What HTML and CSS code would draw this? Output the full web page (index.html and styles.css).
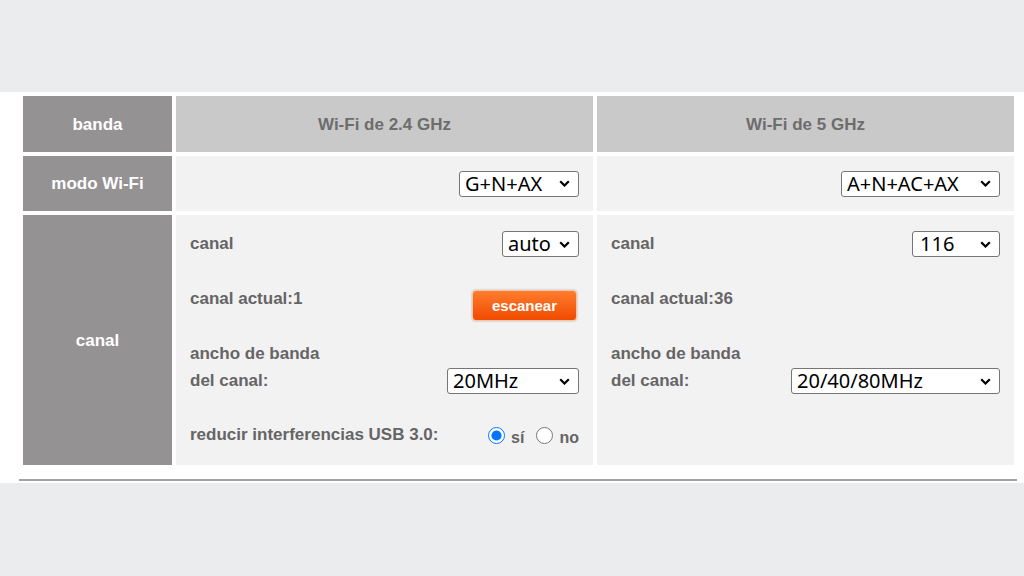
FILE: index.html
```html
<!DOCTYPE html>
<html lang="es">
<head>
    <meta charset="UTF-8">
    <meta name="viewport" content="width=device-width, initial-scale=1.0">
    <title>Wi-Fi</title>
    <link rel="stylesheet" href="styles.css">
</head>
<body>

    <div class="top-band"></div>

    <div class="page">
        <div class="wifi-grid">
            <!-- fila: banda -->
            <div class="cell label-cell">banda</div>
            <div class="cell head-cell">Wi-Fi de 2.4 GHz</div>
            <div class="cell head-cell">Wi-Fi de 5 GHz</div>

            <!-- fila: modo -->
            <div class="cell label-cell">modo Wi-Fi</div>
            <div class="cell mode-cell">
                <select class="sel sel-mode24"><option>G+N+AX</option></select>
            </div>
            <div class="cell mode-cell">
                <select class="sel sel-mode5"><option>A+N+AC+AX</option></select>
            </div>

            <!-- fila: canal -->
            <div class="cell label-cell">canal</div>
            <div class="cell body-cell">
                <div class="row row-channel">
                    <span class="txt">canal</span>
                    <select class="sel sel-auto"><option>auto</option></select>
                </div>
                <div class="row row-current">
                    <span class="txt">canal actual:1</span>
                    <button class="scan-btn">escanear</button>
                </div>
                <div class="row row-width">
                    <span class="txt two-lines">ancho de banda<br>del canal:</span>
                    <select class="sel sel-20"><option>20MHz</option></select>
                </div>
                <div class="row row-usb">
                    <span class="txt">reducir interferencias USB 3.0:</span>
                    <span class="radios">
                        <label class="radio-item"><input type="radio" name="usb" checked><span>sí</span></label>
                        <label class="radio-item"><input type="radio" name="usb"><span>no</span></label>
                    </span>
                </div>
            </div>
            <div class="cell body-cell">
                <div class="row row-channel">
                    <span class="txt">canal</span>
                    <select class="sel sel-116"><option>116</option></select>
                </div>
                <div class="row row-current">
                    <span class="txt">canal actual:36</span>
                </div>
                <div class="row row-width">
                    <span class="txt two-lines">ancho de banda<br>del canal:</span>
                    <select class="sel sel-80"><option>20/40/80MHz</option></select>
                </div>
            </div>
        </div>
        <div class="rule"></div>
    </div>

</body>
</html>
```

FILE: styles.css
```css
body {
    margin: 0;
    background-color: #ebecee; /* gris claro de fondo */
    font-family: "Liberation Sans", Arial, sans-serif;
}

.top-band {
    height: 92px;
}

.page {
    background-color: #ffffff;
    padding: 0 6px 2px 19px;
}

.wifi-grid {
    display: grid;
    grid-template-columns: 149px 417px 417px;
    grid-template-rows: 56px 55px 250px;
    gap: 4px;
    padding: 4px;
    width: 991px;
}

.cell {
    font-size: 17px;
    font-weight: bold;
}

.label-cell {
    background-color: #949293;
    color: #ffffff;
    display: flex;
    align-items: center;
    justify-content: center;
    padding-top: 1px;
}

.head-cell {
    background-color: #c9c9c9;
    color: #6d6d6d;
    display: flex;
    align-items: center;
    justify-content: center;
    padding-top: 2px;
}

.mode-cell {
    background-color: #f3f2f3;
    display: flex;
    align-items: center;
    justify-content: flex-end;
    padding-right: 14px;
}

.body-cell {
    background-color: #f3f2f3;
    padding: 16px 14px 0 14px;
    color: #656565;
}

/* filas dentro de la celda canal */
.row {
    display: flex;
    justify-content: space-between;
}

.row-channel {
    height: 26px;
    align-items: center;
}

.row-current {
    margin-top: 33px;
    height: 31px;
    align-items: flex-start;
}
.row-current .txt {
    line-height: 18px;
}

.row-width {
    margin-top: 19px;
    align-items: flex-end;
}
.two-lines {
    line-height: 27px;
}

.row-usb {
    margin-top: 28px;
    height: 26px;
    align-items: center;
}

/* selects */
.sel {
    -webkit-appearance: none;
    appearance: none;
    height: 26px;
    box-sizing: border-box;
    border: 1px solid #767676;
    border-radius: 3px;
    background-color: #ffffff;
    background-image: url("data:image/svg+xml,%3Csvg xmlns='http://www.w3.org/2000/svg' width='11' height='7'%3E%3Cpath d='M1.2 1.2l4.3 4.3 4.3-4.3' fill='none' stroke='%23000' stroke-width='2.2'/%3E%3C/svg%3E");
    background-repeat: no-repeat;
    background-position: right 8px center;
    font-family: "Noto Sans", "Open Sans", sans-serif;
    font-size: 20px;
    color: #000000;
    padding: 0 0 0 5px;
    line-height: 24px;
}

.sel-mode24 { width: 120px; }
.sel-mode5 { width: 159px; }
.sel-auto { width: 77px; }
.sel-116 { width: 88px; padding-left: 7px; }
.sel-20 { width: 132px; }
.sel-80 { width: 209px; }

/* boton escanear */
.scan-btn {
    width: 105px;
    height: 31px;
    margin-right: 2px;
    border: 1px solid #f3c6a6;
    border-radius: 4px;
    background: linear-gradient(#ff7d2e, #f04a00);
    box-shadow: 0 0 2px rgba(0, 0, 0, 0.35);
    color: #ffffff;
    font-family: "Liberation Sans", Arial, sans-serif;
    font-size: 15px;
    font-weight: bold;
    padding: 0;
}

/* radios */
.radios {
    display: flex;
    gap: 12px;
    margin-right: 0;
}
.radio-item {
    display: flex;
    align-items: center;
}
.radio-item input {
    width: 17px;
    height: 17px;
    margin: 0 6px 0 0;
    accent-color: #0075ff;
}
.radio-item span {
    padding-top: 5px;
    font-size: 16px;
}

.rule {
    margin-top: 10px;
    height: 2px;
    width: 998px;
    background-color: #a3a3a3;
}
```
